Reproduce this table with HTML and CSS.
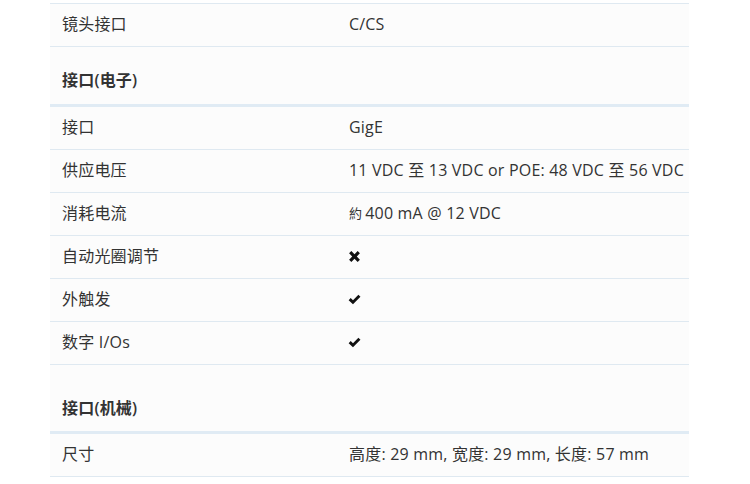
FILE: index.html
```html
<!DOCTYPE html>
<html lang="zh">

<head>
    <meta charset="UTF-8">
    <meta name="viewport" content="width=device-width, initial-scale=1.0">
    <link rel="stylesheet" href="styles.css">
    <title>规格</title>
</head>

<body>
    <div class="specs">
        <div class="row first">
            <div class="label">镜头接口</div>
            <div class="value">C/CS</div>
        </div>

        <div class="group-head">接口(电子)</div>
        <div class="row">
            <div class="label">接口</div>
            <div class="value">GigE</div>
        </div>
        <div class="row">
            <div class="label">供应电压</div>
            <div class="value">11 VDC 至 13 VDC or POE: 48 VDC 至 56 VDC</div>
        </div>
        <div class="row">
            <div class="label">消耗电流</div>
            <div class="value"><span class="approx">約</span> 400 mA @ 12 VDC</div>
        </div>
        <div class="row">
            <div class="label">自动光圈调节</div>
            <div class="value">
                <svg class="mark" width="13" height="13" viewBox="0 0 12 12">
                    <path d="M1 3.1 L3.1 1 L6 3.9 L8.9 1 L11 3.1 L8.1 6 L11 8.9 L8.9 11 L6 8.1 L3.1 11 L1 8.9 L3.9 6 Z" />
                </svg>
            </div>
        </div>
        <div class="row">
            <div class="label">外触发</div>
            <div class="value">
                <svg class="mark" width="13" height="13" viewBox="0 0 12 12">
                    <path d="M0.6 6.6 L2.5 4.7 L4.6 6.8 L9.6 1.6 L11.5 3.5 L4.6 10.4 Z" />
                </svg>
            </div>
        </div>
        <div class="row">
            <div class="label">数字 I/Os</div>
            <div class="value">
                <svg class="mark" width="13" height="13" viewBox="0 0 12 12">
                    <path d="M0.6 6.6 L2.5 4.7 L4.6 6.8 L9.6 1.6 L11.5 3.5 L4.6 10.4 Z" />
                </svg>
            </div>
        </div>

        <div class="group-head second">接口(机械)</div>
        <div class="row">
            <div class="label">尺寸</div>
            <div class="value">高度: 29 mm, 宽度: 29 mm, 长度: 57 mm</div>
        </div>
    </div>
</body>

</html>
```

FILE: styles.css
```css
* {
    margin: 0;
    padding: 0;
    box-sizing: border-box;
}

body {
    background-color: #fff;
    font-family: "Open Sans", "Noto Sans CJK SC", sans-serif;
    font-size: 16px;
    letter-spacing: 0.2px;
    color: #333;
}

.specs {
    width: 639px;
    margin: 3px 0 0 50px;
    background-color: #fcfcfc;
}

.row {
    display: flex;
    align-items: center;
    height: 43px;
    padding-bottom: 2px;
    border-bottom: 1px solid #dfe9f1;
    line-height: 20px;
}

.row.first {
    height: 44px;
    border-top: 1px solid #dfe9f1;
}

.label {
    width: 299px;
    padding-left: 12px;
}

.value {
    display: flex;
    align-items: center;
}

.approx {
    font-size: 13px;
    margin-right: 3px;
}

.mark {
    fill: #111;
    margin-left: -1px;
}

.group-head {
    height: 60px;
    padding: 23px 12px 0;
    line-height: 20px;
    font-weight: 600;
    border-bottom: 3px solid #e0ebf4;
}

.group-head.second {
    height: 69px;
    padding-top: 33px;
}
```
